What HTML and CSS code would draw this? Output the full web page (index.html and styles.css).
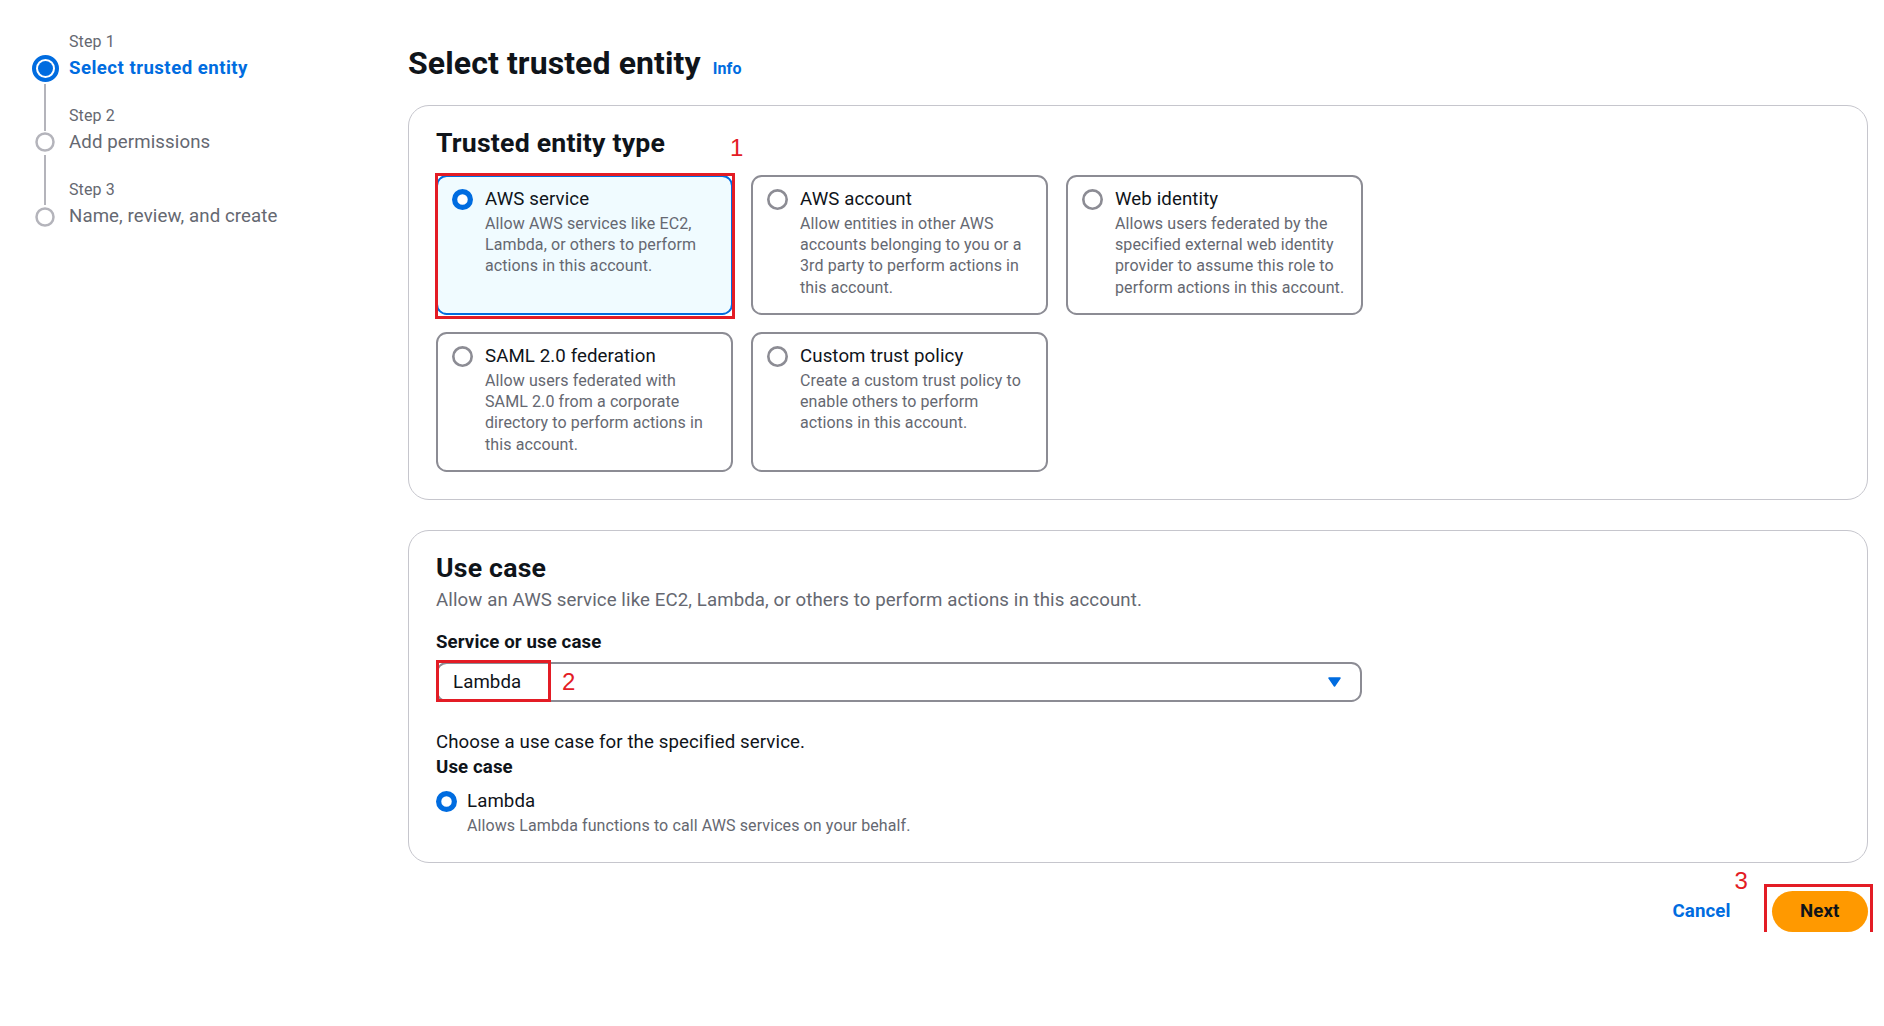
FILE: index.html
```html
<!DOCTYPE html>
<html lang="en">
<head>
<meta charset="utf-8">
<title>Select trusted entity</title>
<link rel="stylesheet" href="styles.css">
</head>
<body>
<div class="page">
  <nav class="steps">
    <div class="step step-active">
      <div class="step-label">Step 1</div>
      <div class="step-dot">
        <svg width="27" height="27" viewBox="0 0 27 27"><circle cx="13.5" cy="13.5" r="11.5" fill="#fff" stroke="#006ce0" stroke-width="4"/><circle cx="13.5" cy="13.5" r="7.5" fill="#006ce0"/></svg>
      </div>
      <div class="step-title">Select trusted entity</div>
    </div>
    <div class="step step-2">
      <div class="step-label">Step 2</div>
      <div class="step-dot">
        <svg width="20" height="20" viewBox="0 0 20 20"><circle cx="10" cy="10" r="8.5" fill="#fff" stroke="#b4b4bb" stroke-width="2.5"/></svg>
      </div>
      <div class="step-title">Add permissions</div>
    </div>
    <div class="step step-3">
      <div class="step-label">Step 3</div>
      <div class="step-dot">
        <svg width="20" height="20" viewBox="0 0 20 20"><circle cx="10" cy="10" r="8.5" fill="#fff" stroke="#b4b4bb" stroke-width="2.5"/></svg>
      </div>
      <div class="step-title">Name, review, and create</div>
    </div>
  </nav>

  <main class="main">
    <div class="page-header">
      <h1>Select trusted entity</h1>
      <a class="info" href="#">Info</a>
    </div>

    <section class="panel panel-entity">
      <h2>Trusted entity type</h2>
      <div class="tiles">
        <div class="tile tile-selected">
          <svg class="radio" viewBox="0 0 16 16"><circle cx="8" cy="8" r="6" fill="#fff" stroke="#006ce0" stroke-width="4"/></svg>
          <div class="tile-text">
            <div class="tile-title">AWS service</div>
            <div class="tile-desc">Allow AWS services like EC2,<br>Lambda, or others to perform<br>actions in this account.</div>
          </div>
          <span class="mark mark-1"></span>
          <span class="mark-num mark-num-1">1</span>
        </div>
        <div class="tile">
          <svg class="radio" viewBox="0 0 16 16"><circle cx="8" cy="8" r="7" fill="#fff" stroke="#8c8c94" stroke-width="2"/></svg>
          <div class="tile-text">
            <div class="tile-title">AWS account</div>
            <div class="tile-desc">Allow entities in other AWS<br>accounts belonging to you or a<br>3rd party to perform actions in<br>this account.</div>
          </div>
        </div>
        <div class="tile">
          <svg class="radio" viewBox="0 0 16 16"><circle cx="8" cy="8" r="7" fill="#fff" stroke="#8c8c94" stroke-width="2"/></svg>
          <div class="tile-text">
            <div class="tile-title">Web identity</div>
            <div class="tile-desc">Allows users federated by the<br>specified external web identity<br>provider to assume this role to<br>perform actions in this account.</div>
          </div>
        </div>
        <div class="tile">
          <svg class="radio" viewBox="0 0 16 16"><circle cx="8" cy="8" r="7" fill="#fff" stroke="#8c8c94" stroke-width="2"/></svg>
          <div class="tile-text">
            <div class="tile-title">SAML 2.0 federation</div>
            <div class="tile-desc">Allow users federated with<br>SAML 2.0 from a corporate<br>directory to perform actions in<br>this account.</div>
          </div>
        </div>
        <div class="tile">
          <svg class="radio" viewBox="0 0 16 16"><circle cx="8" cy="8" r="7" fill="#fff" stroke="#8c8c94" stroke-width="2"/></svg>
          <div class="tile-text">
            <div class="tile-title">Custom trust policy</div>
            <div class="tile-desc">Create a custom trust policy to<br>enable others to perform<br>actions in this account.</div>
          </div>
        </div>
      </div>
    </section>

    <section class="panel panel-usecase">
      <h2>Use case</h2>
      <p class="header-desc">Allow an AWS service like EC2, Lambda, or others to perform actions in this account.</p>
      <div class="field-label field-label-service">Service or use case</div>
      <div class="select">
        <span class="select-value">Lambda</span>
        <svg class="caret" width="13" height="10" viewBox="0 0 13 10"><path d="M1 1h11L6.5 9z" fill="#006ce0" stroke="#006ce0" stroke-width="1.5" stroke-linejoin="round"/></svg>
        <span class="mark mark-2"></span>
        <span class="mark-num mark-num-2">2</span>
      </div>
      <p class="hint">Choose a use case for the specified service.</p>
      <div class="field-label">Use case</div>
      <div class="radio-row">
        <svg class="radio" viewBox="0 0 16 16"><circle cx="8" cy="8" r="6" fill="#fff" stroke="#006ce0" stroke-width="4"/></svg>
        <div>
          <div class="radio-label">Lambda</div>
          <div class="radio-desc">Allows Lambda functions to call AWS services on your behalf.</div>
        </div>
      </div>
    </section>

    <div class="actions">
      <button class="btn-link" type="button">Cancel</button>
      <div class="next-wrap">
        <button class="btn-primary" type="button">Next</button>
        <span class="mark mark-3"></span>
        <span class="mark-num mark-num-3">3</span>
      </div>
    </div>
  </main>
</div>
</body>
</html>
```

FILE: styles.css
```css
* {
  box-sizing: border-box;
}

html,
body {
  margin: 0;
  padding: 0;
  background: #ffffff;
}

body {
  font-family: Roboto, "Noto Sans", "Liberation Sans", sans-serif;
  color: #0f141a;
  font-size: 18.67px;
  line-height: 26.67px;
  letter-spacing: 0.1px;
}

.page {
  display: flex;
  align-items: flex-start;
  padding: 0 16px 0 30px;
}

/* ---------- left wizard navigation ---------- */
.steps {
  width: 378px;
  flex: none;
  padding-top: 30.5px;
}

.step {
  display: grid;
  grid-template-columns: 30px 1fr;
  column-gap: 9px;
}

.step + .step {
  margin-top: 23.3px;
}

.step-label {
  grid-column: 2;
  font-size: 16px;
  line-height: 21.33px;
  color: #656871;
  margin-bottom: 3px;
}

.step-dot {
  grid-column: 1;
  grid-row: 2;
  position: relative;
  height: 26.67px;
  display: flex;
  align-items: center;
  justify-content: center;
}

.step-dot svg {
  display: block;
  flex: none;
}

.step-title {
  grid-column: 2;
  grid-row: 2;
  font-size: 18.67px;
  line-height: 26.67px;
  color: #656871;
}

.step-active .step-title {
  color: #006ce0;
  font-weight: 700;
  letter-spacing: 0.45px;
}

.step-2 .step-dot::before,
.step-3 .step-dot::before {
  content: "";
  position: absolute;
  left: 14px;
  width: 2px;
  background: #b4b4bb;
}

.step-2 .step-dot::before {
  bottom: calc(50% + 11px);
  height: 47px;
}

.step-3 .step-dot::before {
  bottom: calc(50% + 12px);
  height: 50px;
}

/* ---------- main column ---------- */
.main {
  flex: 1;
  min-width: 0;
  padding-top: 43px;
}

.page-header {
  display: flex;
  align-items: baseline;
  gap: 12px;
}

.page-header h1 {
  margin: 0;
  font-size: 32px;
  line-height: 40px;
  font-weight: 700;
  color: #0f141a;
}

.info {
  color: #006ce0;
  font-weight: 700;
  font-size: 16px;
  text-decoration: none;
}

.panel {
  border: 1px solid #c6c6cd;
  border-radius: 21px;
  padding: 21px 27px 27px;
  background: #ffffff;
}

.panel h2 {
  margin: 0;
  font-size: 26.67px;
  line-height: 32px;
  font-weight: 700;
  letter-spacing: 0.2px;
  color: #0f141a;
}

.panel-entity {
  margin-top: 22px;
}

.panel-usecase {
  margin-top: 30px;
  padding-bottom: 25.5px;
}

/* ---------- tiles ---------- */
.tiles {
  display: grid;
  grid-template-columns: repeat(3, 297px);
  column-gap: 18px;
  row-gap: 17px;
  margin-top: 16px;
}

.tile {
  position: relative;
  display: flex;
  align-items: flex-start;
  gap: 12px;
  border: 2px solid #8c8c94;
  border-radius: 10.67px;
  padding: 9px 6px 15px 14px;
  background: #ffffff;
}

.tile-selected {
  border-color: #006ce0;
  background: #f0fbff;
}

.radio {
  display: block;
  flex: none;
  width: 21px;
  height: 21px;
  margin-top: 2.8px;
}

.tile-title {
  font-size: 18.67px;
  line-height: 26.67px;
  color: #0f141a;
}

.tile-desc {
  font-size: 16px;
  line-height: 21.33px;
  color: #656871;
}

/* ---------- use case panel ---------- */
.header-desc {
  margin: 3px 0 0;
  color: #656871;
  font-size: 18.67px;
  line-height: 26.67px;
}

.field-label {
  font-weight: 700;
  font-size: 18.67px;
  line-height: 25px;
  color: #0f141a;
}

.field-label-service {
  margin-top: 15px;
  line-height: 26.67px;
}

.select {
  position: relative;
  margin-top: 7px;
  width: 926px;
  height: 40px;
  border: 2px solid #8c8c94;
  border-radius: 10.67px;
  padding: 0 19.5px 0 15px;
  display: flex;
  align-items: center;
  justify-content: space-between;
  background: #ffffff;
}

.select-value {
  font-size: 18.67px;
  color: #0f141a;
}

.caret {
  display: block;
  flex: none;
}

.hint {
  margin: 28px 0 0;
  font-size: 18.67px;
  line-height: 25px;
  color: #0f141a;
}

.radio-row {
  display: flex;
  align-items: flex-start;
  gap: 10px;
  margin-top: 7.7px;
}

.radio-label {
  font-size: 18.67px;
  line-height: 26.67px;
  color: #0f141a;
}

.radio-desc {
  font-size: 16px;
  line-height: 21.33px;
  color: #656871;
}

/* ---------- actions ---------- */
.actions {
  display: flex;
  justify-content: flex-end;
  align-items: center;
  margin-top: 28px;
}

.btn-link {
  font: inherit;
  font-weight: 700;
  font-size: 18.67px;
  letter-spacing: 0.1px;
  color: #006ce0;
  background: none;
  border: none;
  padding: 0;
  margin: 0 41px 0 0;
  cursor: pointer;
}

.next-wrap {
  position: relative;
}

.btn-primary {
  display: block;
  font: inherit;
  font-weight: 700;
  font-size: 18.67px;
  letter-spacing: 0.1px;
  line-height: 41px;
  height: 41px;
  padding: 0 28.5px;
  border: none;
  border-radius: 20.5px;
  background: #ff9900;
  color: #0f141a;
  cursor: pointer;
}

/* ---------- red annotation overlays ---------- */
.mark {
  position: absolute;
  border: 3px solid #e31c25;
  pointer-events: none;
}

.mark-num {
  position: absolute;
  font-family: "Liberation Sans", Arial, sans-serif;
  font-size: 24px;
  line-height: 24px;
  letter-spacing: 0;
  color: #e31c25;
  pointer-events: none;
}

.mark-1 {
  top: -4px;
  left: -3px;
  right: -4px;
  bottom: -6px;
}

.mark-num-1 {
  top: -41px;
  left: 292px;
}

.mark-2 {
  top: -4px;
  left: -2px;
  width: 115px;
  height: 42px;
}

.mark-num-2 {
  top: 6px;
  left: 124px;
}

.mark-3 {
  top: -7px;
  left: -8px;
  right: -5px;
  bottom: -4px;
}

.mark-num-3 {
  top: -22px;
  left: -37px;
}
```
